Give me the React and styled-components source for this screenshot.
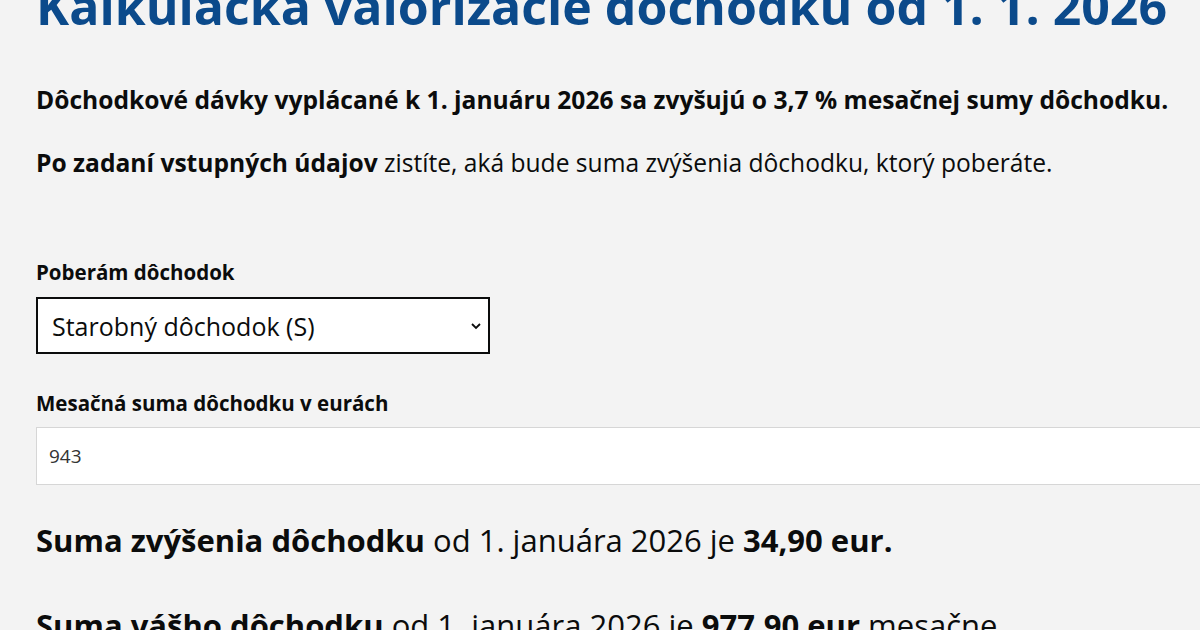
import React from 'react';
import styled, { createGlobalStyle } from 'styled-components';

const Global = createGlobalStyle`
    html, body {
        margin: 0;
        padding: 0;
        background: #f3f3f3;
        overflow: hidden;
    }
    body {
        font-family: "Open Sans", "Noto Sans", sans-serif;
        color: #0b0c0c;
    }
`;

const Page = styled.main`
    width: 1200px;
    height: 630px;
    padding-left: 36px;
    box-sizing: border-box;
    overflow: hidden;
`;

const Title = styled.h1`
    margin: -24px 0 0;
    font-size: 50px;
    line-height: 60px;
    font-weight: 700;
    color: #0b4a8b;
    white-space: nowrap;
`;

const Lead = styled.p`
    margin: ${p => p.$top}px 0 0;
    font-size: 24.6px;
    line-height: 30px;
    font-weight: ${p => (p.$bold ? 700 : 400)};
    white-space: nowrap;
`;

const Field = styled.div`
    margin-top: ${p => p.$top}px;
    display: flex;
    flex-direction: column;
    gap: ${p => p.$gap}px;
`;

const Label = styled.label`
    font-size: 20.5px;
    line-height: 24px;
    font-weight: 700;
`;

const SelectWrap = styled.div`
    position: relative;
    width: 454px;
`;

const Select = styled.select`
    appearance: none;
    width: 100%;
    height: 57px;
    box-sizing: border-box;
    padding: 0 40px 0 14px;
    border: 2px solid #0b0c0c;
    border-radius: 0;
    background: #fff;
    font-family: inherit;
    font-size: 25px;
    color: #0b0c0c;
`;

const Chevron = styled.svg`
    position: absolute;
    right: 8px;
    top: 25px;
    pointer-events: none;
`;

const Input = styled.input`
    width: 100%;
    height: 58px;
    box-sizing: border-box;
    padding: 0 12px;
    border: 1px solid #d6d6d6;
    border-right: none;
    background: #fff;
    font-family: inherit;
    font-size: 19px;
    color: #333;
    outline: none;
`;

const Result = styled.p`
    margin: ${p => p.$top}px 0 0;
    font-size: 31px;
    line-height: 40px;
    white-space: nowrap;
`;

export default function App() {
    return (
        <Page>
            <Global />
            <Title>Kalkulačka valorizácie dôchodku od 1. 1. 2026</Title>
            <Lead $bold $top={49}>
                Dôchodkové dávky vyplácané k 1. januáru 2026 sa zvyšujú o 3,7 % mesačnej sumy dôchodku.
            </Lead>
            <Lead $top={33}>
                <b>Po zadaní vstupných údajov</b> zistíte, aká bude suma zvýšenia dôchodku, ktorý poberáte.
            </Lead>
            <Field $top={82} $gap={13}>
                <Label>Poberám dôchodok</Label>
                <SelectWrap>
                    <Select defaultValue="S">
                        <option value="S">Starobný dôchodok (S)</option>
                        <option value="I">Invalidný dôchodok (I)</option>
                    </Select>
                    <Chevron width="12" height="8" viewBox="0 0 12 8">
                        <path d="M2 2 L6 6 L10 2" fill="none" stroke="#0b0c0c" strokeWidth="1.8" />
                    </Chevron>
                </SelectWrap>
            </Field>
            <Field $top={37} $gap={12}>
                <Label>Mesačná suma dôchodku v eurách</Label>
                <Input defaultValue="943" />
            </Field>
            <Result $top={35}>
                <b>Suma zvýšenia dôchodku</b> od 1. januára 2026 je <b>34,90 eur.</b>
            </Result>
            <Result $top={45}>
                <b>Suma vášho dôchodku</b> od 1. januára 2026 je <b>977,90 eur</b> mesačne.
            </Result>
        </Page>
    );
}
